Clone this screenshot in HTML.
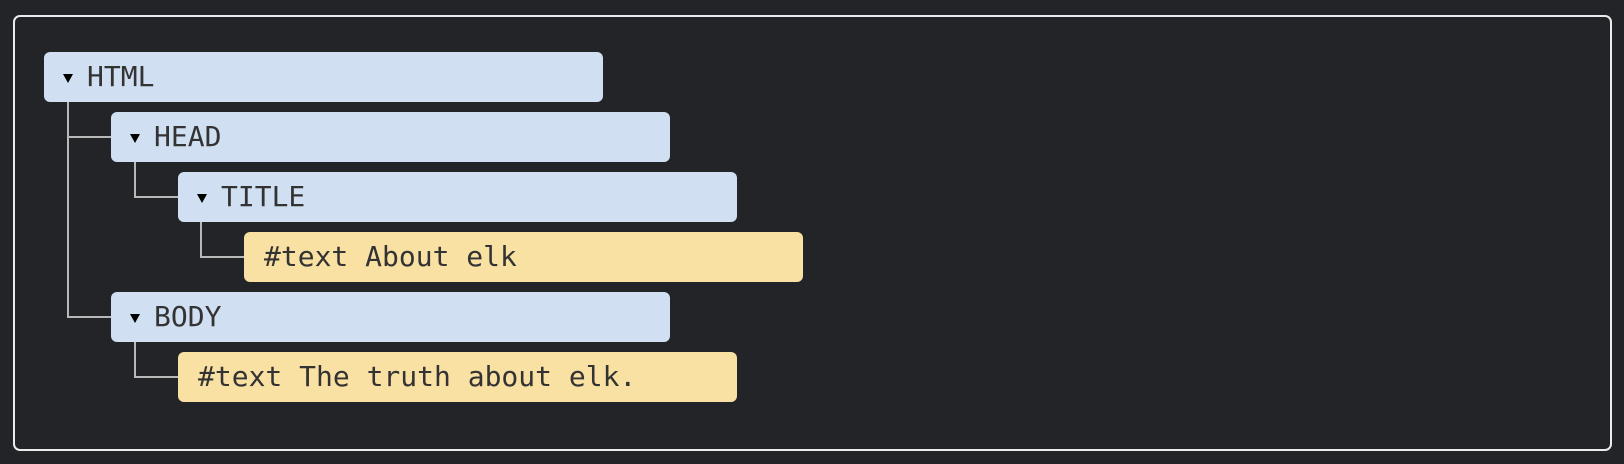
<!DOCTYPE html>
<html><head><style>
html,body{margin:0;padding:0;background:#232428;width:1624px;height:464px;overflow:hidden}
.frame{position:absolute;left:13px;top:15px;width:1595px;height:432px;border:2px solid #ececec;border-radius:7px}
.n{position:absolute;height:50px;width:559px;border-radius:6px;font-family:"DejaVu Sans Mono","Liberation Mono",monospace;font-size:28px;line-height:50px;color:#333;white-space:pre}
.b{background:#d0dff2}
.y{background:#f9e0a3}
.t{position:absolute;left:19px;top:22px;width:0;height:0;border-left:5px solid transparent;border-right:5px solid transparent;border-top:9px solid #000}
.b span{position:absolute;left:43px}
.y span{position:absolute;left:20px}
.l{position:absolute;background:#b8b8b8}
</style></head><body>
<div class="frame"></div>
<div class="l" style="left:67px;top:101px;width:2px;height:217px"></div>
<div class="l" style="left:67px;top:136px;width:44px;height:2px"></div>
<div class="l" style="left:67px;top:316px;width:44px;height:2px"></div>
<div class="l" style="left:134px;top:161px;width:2px;height:37px"></div>
<div class="l" style="left:134px;top:196px;width:44px;height:2px"></div>
<div class="l" style="left:200px;top:221px;width:2px;height:37px"></div>
<div class="l" style="left:200px;top:256px;width:44px;height:2px"></div>
<div class="l" style="left:134px;top:341px;width:2px;height:37px"></div>
<div class="l" style="left:134px;top:376px;width:44px;height:2px"></div>
<div class="n b" style="left:44px;top:52px"><i class="t"></i><span>HTML</span></div>
<div class="n b" style="left:111px;top:112px"><i class="t"></i><span>HEAD</span></div>
<div class="n b" style="left:178px;top:172px"><i class="t"></i><span>TITLE</span></div>
<div class="n y" style="left:244px;top:232px"><span>#text About elk</span></div>
<div class="n b" style="left:111px;top:292px"><i class="t"></i><span>BODY</span></div>
<div class="n y" style="left:178px;top:352px"><span>#text The truth about elk.</span></div>
</body></html>
